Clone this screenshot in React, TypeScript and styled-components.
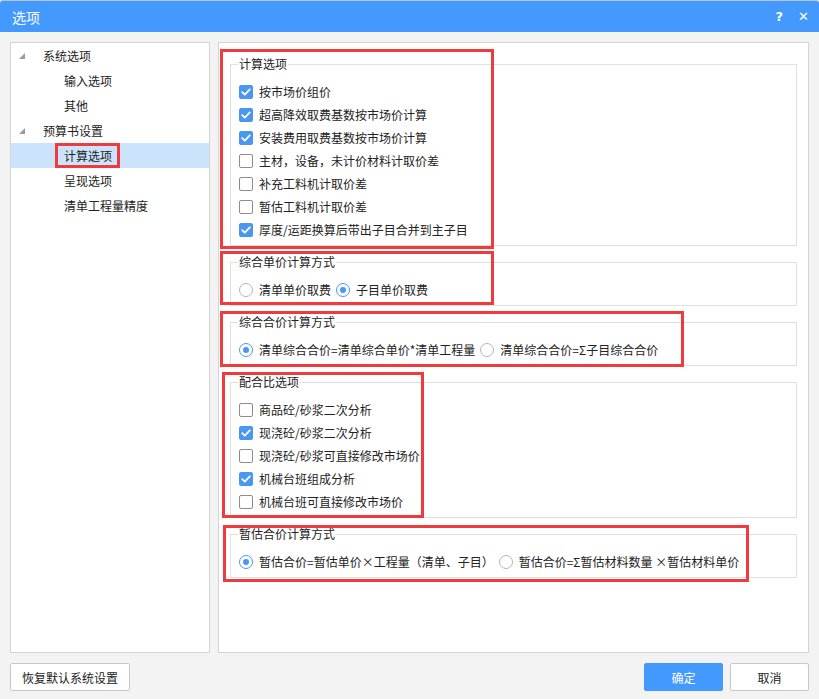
import React, { useState } from "react";
import styled, { createGlobalStyle } from "styled-components";

const GlobalStyle = createGlobalStyle`
  html, body {
    margin: 0;
    padding: 0;
    background: #f3f3f3;
  }
  * {
    box-sizing: border-box;
  }
`;

// 트리 데이터
const treeData = [
  { label: "系统选项", level: 0 },
  { label: "输入选项", level: 1 },
  { label: "其他", level: 1 },
  { label: "预算书设置", level: 0 },
  { label: "计算选项", level: 1 },
  { label: "呈现选项", level: 1 },
  { label: "清单工程量精度", level: 1 },
];

const calcOptions = [
  { label: "按市场价组价", checked: true },
  { label: "超高降效取费基数按市场价计算", checked: true },
  { label: "安装费用取费基数按市场价计算", checked: true },
  { label: "主材，设备，未计价材料计取价差", checked: false },
  { label: "补充工料机计取价差", checked: false },
  { label: "暂估工料机计取价差", checked: false },
  { label: "厚度/运距换算后带出子目合并到主子目", checked: true },
];

const mixOptions = [
  { label: "商品砼/砂浆二次分析", checked: false },
  { label: "现浇砼/砂浆二次分析", checked: true },
  { label: "现浇砼/砂浆可直接修改市场价", checked: false },
  { label: "机械台班组成分析", checked: true },
  { label: "机械台班可直接修改市场价", checked: false },
];

// 빨간 표시 박스 위치 (그룹 기준)
type Mark = { top: number; left: number; width: number; height: number };

const CheckIcon = () => (
  <svg width="10" height="8" viewBox="0 0 10 8">
    <path
      d="M1.2 4.2 L3.8 6.6 L8.8 1.4"
      fill="none"
      stroke="#fff"
      strokeWidth="1.8"
      strokeLinecap="round"
      strokeLinejoin="round"
    />
  </svg>
);

const Check: React.FC<{ label: string; checked: boolean }> = ({ label, checked }) => (
  <OptionRow>
    <CheckBox $checked={checked}>{checked && <CheckIcon />}</CheckBox>
    <OptionText>{label}</OptionText>
  </OptionRow>
);

const Radio: React.FC<{ label: string; checked: boolean }> = ({ label, checked }) => (
  <RadioItem>
    <RadioCircle $checked={checked} />
    <OptionText>{label}</OptionText>
  </RadioItem>
);

const Group: React.FC<{ title: string; mark: Mark; children: React.ReactNode }> = ({
  title,
  mark,
  children,
}) => (
  <GroupWrap>
    <GroupBox>
      <Legend>{title}</Legend>
      {children}
    </GroupBox>
    <RedMark
      style={{ top: mark.top, left: mark.left, width: mark.width, height: mark.height }}
    />
  </GroupWrap>
);

const App: React.FC = () => {
  const [selected] = useState(4);

  return (
    <>
      <GlobalStyle />
      <Dialog>
        <TitleBar>
          <Title>选项</Title>
          <TitleButtons>
            <TitleBtn>?</TitleBtn>
            <TitleBtn>✕</TitleBtn>
          </TitleButtons>
        </TitleBar>

        <Body>
          <TreePanel>
            {treeData.map((item, index) => (
              <TreeRow key={index} $selected={index === selected}>
                {item.level === 0 ? <Arrow /> : <ArrowSpace />}
                <TreeLabel $marked={index === selected}>{item.label}</TreeLabel>
              </TreeRow>
            ))}
          </TreePanel>

          <ContentPanel>
            <Group title="计算选项" mark={{ top: -7, left: -10, width: 274, height: 200 }}>
              <CheckList>
                {calcOptions.map((o, i) => (
                  <Check key={i} label={o.label} checked={o.checked} />
                ))}
              </CheckList>
            </Group>

            <Group title="综合单价计算方式" mark={{ top: -3, left: -10, width: 274, height: 54 }}>
              <RadioRow>
                <Radio label="清单单价取费" checked={false} />
                <Radio label="子目单价取费" checked={true} />
              </RadioRow>
            </Group>

            <Group title="综合合价计算方式" mark={{ top: -3, left: -10, width: 464, height: 56 }}>
              <RadioRow>
                <Radio label="清单综合合价=清单综合单价*清单工程量" checked={true} />
                <Radio label="清单综合合价=Σ子目综合合价" checked={false} />
              </RadioRow>
            </Group>

            <Group title="配合比选项" mark={{ top: -2, left: -8, width: 202, height: 146 }}>
              <CheckList>
                {mixOptions.map((o, i) => (
                  <Check key={i} label={o.label} checked={o.checked} />
                ))}
              </CheckList>
            </Group>

            <Group title="暂估合价计算方式" mark={{ top: -1, left: -7, width: 526, height: 57 }}>
              <RadioRow>
                <Radio label="暂估合价=暂估单价×工程量（清单、子目）" checked={true} />
                <Radio label="暂估合价=Σ暂估材料数量 ×暂估材料单价" checked={false} />
              </RadioRow>
            </Group>
          </ContentPanel>
        </Body>

        <Footer>
          <FooterButton>恢复默认系统设置</FooterButton>
          <FooterRight>
            <FooterButton $primary>确定</FooterButton>
            <FooterButton>取消</FooterButton>
          </FooterRight>
        </Footer>
      </Dialog>
    </>
  );
};

export default App;

// 전체 다이얼로그
const Dialog = styled.div`
  width: 819px;
  height: 699px;
  display: flex;
  flex-direction: column;
  background: #f3f3f3;
  font-family: "Noto Sans CJK SC", "Noto Sans", sans-serif;
  font-size: 12px;
  color: #222;
  overflow: hidden;
`;

// 타이틀 바
const TitleBar = styled.div`
  height: 32px;
  flex-shrink: 0;
  background: #4499ff;
  border-top: 1px solid #b8c4d2;
  border-radius: 3px 3px 0 0;
  display: flex;
  align-items: center;
  justify-content: space-between;
  padding: 0 10px 0 12px;
`;

const Title = styled.span`
  color: #fff;
  font-size: 14px;
`;

const TitleButtons = styled.div`
  display: flex;
  gap: 15px;
  align-items: center;
`;

const TitleBtn = styled.span`
  color: #fff;
  font-family: "DejaVu Sans", sans-serif;
  font-weight: bold;
  font-size: 13px;
`;

// 본문 영역
const Body = styled.div`
  display: flex;
  gap: 8px;
  padding: 10px 10px 0 10px;
  height: 621px;
`;

// 왼쪽 트리
const TreePanel = styled.div`
  width: 200px;
  height: 611px;
  background: #fff;
  border: 1px solid #d4d4d4;
`;

const TreeRow = styled.div<{ $selected: boolean }>`
  height: 25px;
  display: flex;
  align-items: center;
  background: ${(p) => (p.$selected ? "#cce4fb" : "transparent")};
`;

// 펼침 삼각형
const Arrow = styled.span`
  width: 0;
  height: 0;
  margin-left: 8px;
  margin-right: 9px;
  border-left: 6px solid transparent;
  border-bottom: 6px solid #9a9a9a;
`;

const ArrowSpace = styled.span`
  width: 44px;
`;

const TreeLabel = styled.span<{ $marked: boolean }>`
  font-size: 12px;
  color: #222;
  padding: 1px 5px 1px 6px;
  border: 3px solid ${(p) => (p.$marked ? "#ef3b3e" : "transparent")};
`;

// 오른쪽 옵션 패널
const ContentPanel = styled.div`
  flex: 1;
  height: 611px;
  background: #fff;
  border: 1px solid #d4d4d4;
  padding: 13px 11px 0 11px;
  display: flex;
  flex-direction: column;
  gap: 8px;
`;

// 그룹 박스
const GroupWrap = styled.div`
  position: relative;
`;

const GroupBox = styled.fieldset`
  margin: 0;
  border: 1px solid #e0e0e0;
  padding: 8px 8px 4px 8px;
  min-width: 0;
`;

const Legend = styled.legend`
  font-size: 12px;
  line-height: 16px;
  padding: 0 1px;
  margin-left: -1px;
  color: #222;
`;

const RedMark = styled.div`
  position: absolute;
  border: 3px solid #ef3b3e;
  pointer-events: none;
`;

const CheckList = styled.div`
  display: flex;
  flex-direction: column;
`;

const OptionRow = styled.div`
  height: 23px;
  display: flex;
  align-items: center;
  gap: 6px;
`;

const CheckBox = styled.span<{ $checked: boolean }>`
  width: 14px;
  height: 14px;
  border-radius: 2px;
  display: flex;
  align-items: center;
  justify-content: center;
  background: ${(p) => (p.$checked ? "#4a97f2" : "#fff")};
  border: 1px solid ${(p) => (p.$checked ? "#4a97f2" : "#8d8d8d")};
`;

const OptionText = styled.span`
  white-space: nowrap;
  color: #222;
`;

const RadioRow = styled.div`
  height: 23px;
  display: flex;
  align-items: center;
  gap: 5px;
`;

const RadioItem = styled.div`
  display: flex;
  align-items: center;
  gap: 6px;
`;

const RadioCircle = styled.span<{ $checked: boolean }>`
  width: 14px;
  height: 14px;
  border-radius: 50%;
  border: 1px solid ${(p) => (p.$checked ? "#4a97f2" : "#b5b5b5")};
  background: #fff;
  display: flex;
  align-items: center;
  justify-content: center;

  &::after {
    content: "";
    width: 6px;
    height: 6px;
    border-radius: 50%;
    background: ${(p) => (p.$checked ? "#4a97f2" : "transparent")};
  }
`;

// 하단 버튼
const Footer = styled.div`
  display: flex;
  justify-content: space-between;
  align-items: center;
  padding: 10px 10px 0 10px;
`;

const FooterRight = styled.div`
  display: flex;
  gap: 7px;
`;

const FooterButton = styled.button<{ $primary?: boolean }>`
  height: 28px;
  min-width: 79px;
  padding: 0 11px;
  font-family: "Noto Sans CJK SC", "Noto Sans", sans-serif;
  font-size: 12px;
  border-radius: 2px;
  border: 1px solid ${(p) => (p.$primary ? "#4499ff" : "#c8c8c8")};
  background: ${(p) => (p.$primary ? "#4499ff" : "#fff")};
  color: ${(p) => (p.$primary ? "#fff" : "#222")};
`;
